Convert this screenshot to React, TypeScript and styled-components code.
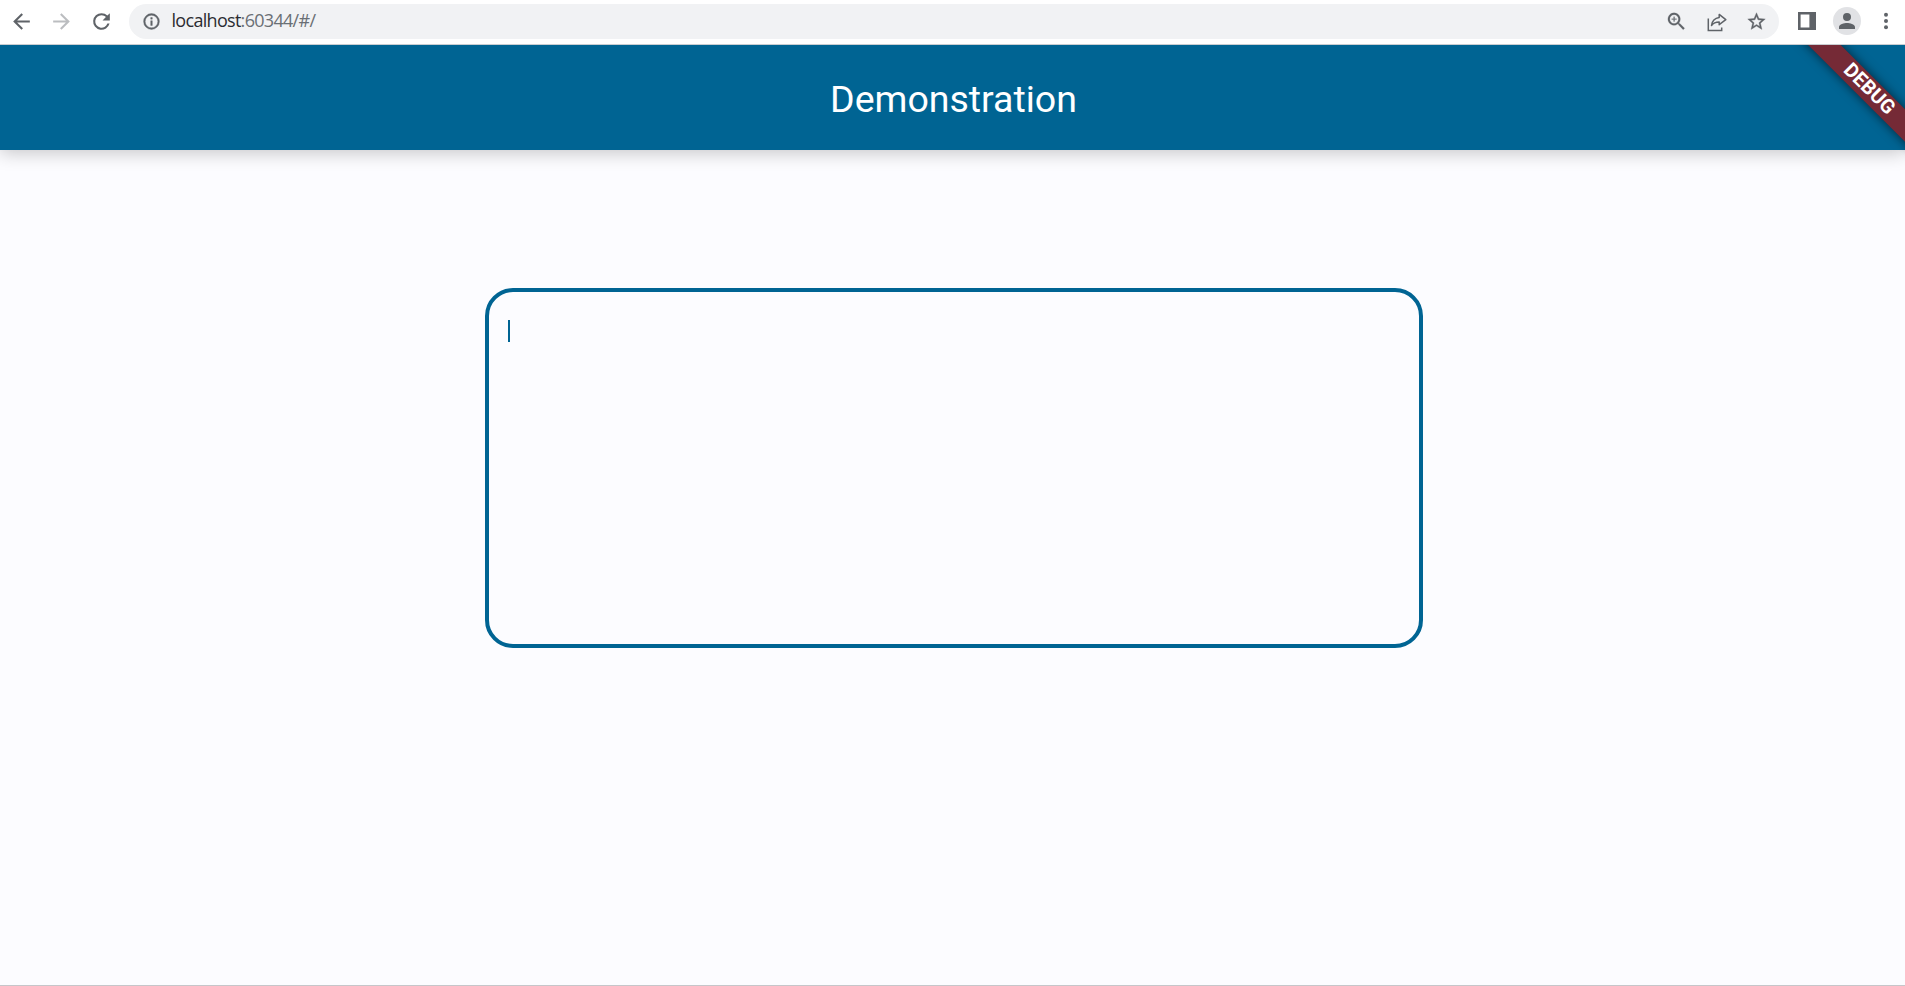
import React from "react";
import styled, { createGlobalStyle } from "styled-components";

const GlobalStyle = createGlobalStyle`
  * { box-sizing: border-box; }
  body { margin: 0; background: #fcfcff; overflow: hidden; }
`;

const Window = styled.div`
  display: flex;
  flex-direction: column;
  width: 100%;
  height: 100vh;
  overflow: hidden;
  font-family: Roboto, "Liberation Sans", sans-serif;
`;

const Toolbar = styled.div`
  flex: none;
  display: flex;
  align-items: flex-start;
  height: 45px;
  padding: 0 0 0 1.5px;
  background: #fff;
  border-bottom: 1px solid #c9cdd1;
`;

const IconButton = styled.button<{ $w?: number; $color?: string; $h?: number }>`
  flex: none;
  display: flex;
  align-items: center;
  justify-content: center;
  width: ${(p) => p.$w ?? 40}px;
  height: ${(p) => p.$h ?? 42}px;
  padding: 0;
  border: 0;
  background: none;
  color: ${(p) => p.$color ?? "#5f6368"};
  svg { display: block; flex: none; }
`;

const AddressBar = styled.div`
  flex: 1;
  display: flex;
  align-items: center;
  height: 35px;
  margin: 4px 7px 0 7.5px;
  padding: 0 2.5px 0 2px;
  border-radius: 18px;
  background: #f1f2f4;
`;

const Url = styled.div`
  flex: 1;
  padding: 0 0 2px 0.5px;
  font-family: "Open Sans", "Noto Sans", sans-serif;
  font-size: 18px;
  line-height: 33px;
  letter-spacing: -0.7px;
  white-space: nowrap;
  color: #6a6f75;
`;

const Host = styled.span`
  color: #2b2c31;
`;

const Avatar = styled.span`
  display: flex;
  align-items: center;
  justify-content: center;
  width: 28px;
  height: 28px;
  border-radius: 50%;
  background: #e1e2e5;
`;

const Page = styled.div`
  position: relative;
  flex: 1;
  display: flex;
  flex-direction: column;
  overflow: hidden;
  background: #fcfcff;
  border-bottom: 1px solid #c6c6ca;
`;

const AppBar = styled.header`
  flex: none;
  display: flex;
  align-items: center;
  justify-content: center;
  height: 105px;
  padding: 2px 0 0 2px;
  background: #006493;
  box-shadow: 0 3px 17px rgba(0, 0, 0, 0.22);
`;

const Title = styled.h1`
  margin: 0;
  font-size: 37.5px;
  font-weight: 400;
  line-height: 44px;
  color: #fff;
`;

const Body = styled.main`
  flex: 1;
  display: flex;
  justify-content: center;
  align-items: flex-start;
  padding-top: 137.5px;
  padding-left: 3px;
`;

const TextField = styled.div`
  width: 938px;
  height: 360px;
  padding: 28px 19px;
  border: 4px solid #006493;
  border-radius: 28px;
`;

const Caret = styled.div`
  width: 2px;
  height: 22.5px;
  background: #006493;
`;

const DebugBanner = styled.div`
  position: absolute;
  right: -59.7px;
  top: 28.7px;
  width: 200px;
  height: 22.6px;
  padding-left: 11px;
  transform: rotate(45deg);
  background: #752a36;
  box-shadow: 0 0 11px rgba(0, 0, 0, 0.6);
  color: #fff;
  font-size: 19.8px;
  font-weight: 700;
  line-height: 22.8px;
  text-align: center;
`;

const MaterialIcon = ({ d, size = 25, bold = 0 }: { d: string; size?: number; bold?: number }) => (
  <svg width={size} height={size} viewBox="0 0 24 24" fill="currentColor" stroke="currentColor" strokeWidth={bold}>
    <path d={d} />
  </svg>
);

const paths = {
  back: "M20 11H7.83l5.59-5.59L12 4l-8 8 8 8 1.41-1.41L7.83 13H20v-2z",
  forward: "M12 4l-1.41 1.41L16.17 11H4v2h12.17l-5.58 5.59L12 20l8-8z",
  reload:
    "M17.65 6.35A7.96 7.96 0 0 0 12 4a8 8 0 1 0 7.73 10h-2.08A6 6 0 1 1 12 6c1.66 0 3.14.69 4.22 1.78L13 11h7V4l-2.35 2.35z",
  info: "M11 7h2v2h-2zm0 4h2v6h-2zm1-9a10 10 0 1 0 0 20 10 10 0 0 0 0-20zm0 18a8 8 0 1 1 0-16 8 8 0 0 1 0 16z",
  zoom: "M15.5 14h-.79l-.28-.27A6.5 6.5 0 1 0 13.73 14.43l.27.28v.79l5 4.99L20.49 19l-4.99-5zm-6 0a4.5 4.5 0 1 1 0-9 4.5 4.5 0 0 1 0 9zM12 10h-2v2H9v-2H7V9h2V7h1v2h2v1z",
  star: "M22 9.24l-7.19-.62L12 2 9.19 8.63 2 9.24l5.46 4.73L5.82 21 12 17.27 18.18 21l-1.63-7.03L22 9.24zM12 15.4l-3.76 2.27 1-4.28-3.32-2.88 4.38-.38L12 6.1l1.71 4.04 4.38.38-3.32 2.88 1 4.28L12 15.4z",
  person: "M12 12a4 4 0 1 0 0-8 4 4 0 0 0 0 8zm0 2c-2.67 0-8 1.34-8 4v2h16v-2c0-2.66-5.33-4-8-4z",
};

const ShareIcon = () => (
  <svg width="20" height="20" viewBox="0 0 20 20" fill="none" stroke="currentColor" strokeWidth="1.5">
    <path d="M1.3 6.5v11.9h13.4v-3" />
    <path d="M12.2 2.4l6.6 5.3-6.6 5V9.9c-3.7 0-5.9.9-7.7 3.6.6-4.3 3.2-7.2 7.7-7.9z" strokeLinejoin="round" />
  </svg>
);

const SidePanelIcon = () => (
  <svg width="18" height="18" viewBox="0 0 18 18" fill="currentColor">
    <path fillRule="evenodd" d="M0 0h18v18H0zM2.6 2.6v12.8h8.8V2.6z" />
  </svg>
);

const MenuIcon = () => (
  <svg width="6" height="18" viewBox="0 0 6 18" fill="currentColor">
    <circle cx="3" cy="2.7" r="2" />
    <circle cx="3" cy="9" r="2" />
    <circle cx="3" cy="15.3" r="2" />
  </svg>
);

export default function App() {
  return (
    <Window>
      <GlobalStyle />
      <Toolbar>
        <IconButton aria-label="Back"><MaterialIcon d={paths.back} /></IconButton>
        <IconButton aria-label="Forward" $color="#bbbdc0"><MaterialIcon d={paths.forward} /></IconButton>
        <IconButton aria-label="Reload"><MaterialIcon d={paths.reload} /></IconButton>
        <AddressBar>
          <IconButton aria-label="Site information" $h={35}><MaterialIcon d={paths.info} size={19} bold={0.5} /></IconButton>
          <Url><Host>localhost</Host>:60344/#/</Url>
          <IconButton aria-label="Zoom" $h={35}><MaterialIcon d={paths.zoom} size={23} bold={0.2} /></IconButton>
          <IconButton aria-label="Share" $h={35}><ShareIcon /></IconButton>
          <IconButton aria-label="Bookmark" $h={35}><MaterialIcon d={paths.star} size={21} bold={0.4} /></IconButton>
        </AddressBar>
        <IconButton aria-label="Side panel" $w={41}><SidePanelIcon /></IconButton>
        <IconButton aria-label="Profile"><Avatar><MaterialIcon d={paths.person} size={24} /></Avatar></IconButton>
        <IconButton aria-label="Menu" $w={38}><MenuIcon /></IconButton>
      </Toolbar>
      <Page>
        <AppBar><Title>Demonstration</Title></AppBar>
        <Body>
          <TextField role="textbox"><Caret /></TextField>
        </Body>
        <DebugBanner>DEBUG</DebugBanner>
      </Page>
    </Window>
  );
}
